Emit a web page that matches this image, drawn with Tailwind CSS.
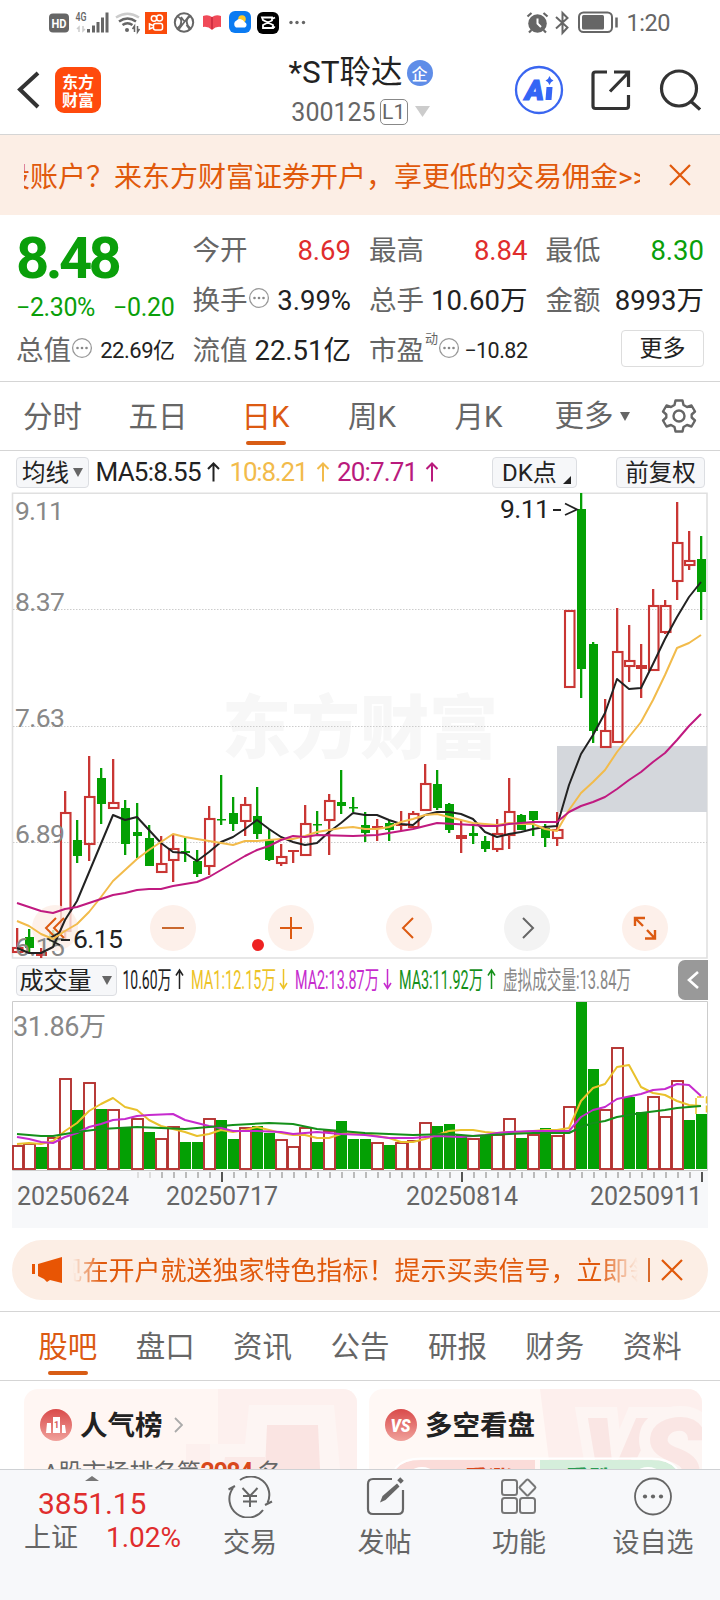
<!DOCTYPE html>
<html lang="zh-CN">
<head>
<meta charset="utf-8">
<title>*ST聆达 300125</title>
<script src="https://cdn.jsdelivr.net/npm/@tailwindcss/browser@4"></script>
</head>
<body class="bg-white">
<div class="flex h-[1600px] w-[720px] flex-col overflow-hidden bg-white font-['Roboto','Noto_Sans_CJK_SC',sans-serif] text-[#666]">

  <!-- status bar -->
  <div class="flex h-[46px] shrink-0 items-center">
    <svg width="720" height="46" viewBox="0 0 720 46" fill="none" stroke="#666" stroke-width="2">
      <rect x="49" y="13.500" width="20" height="19" rx="4" fill="#666" stroke="none"/>
      <text x="51.500" y="27.500" font-size="12.500" font-weight="700" fill="#fff" stroke="none" textLength="15" lengthAdjust="spacingAndGlyphs">HD</text>
      <text x="75.500" y="21" font-size="12" font-weight="500" fill="#666" stroke="none" textLength="11" lengthAdjust="spacingAndGlyphs">4G</text>
      <path d="M79 32v-5l-2 2M83 26v5l2-2" stroke="#ccc" stroke-width="1.500"/>
      <path d="M88.500 29v3.500M93.500 25.500v7M98 22v10.500M102.500 17.500v15M107 12.500v20" stroke-width="3"/>
      <path d="M116 17.500q11.500-7.500 23 0" stroke="#ccc" stroke-width="2.500"/>
      <path d="M119 21.500q8.500-6 17 0M122.500 25q5-3.500 10 0" stroke-width="2.500"/>
      <circle cx="127" cy="30" r="2" fill="#666" stroke="none"/>
      <path d="M134.500 32v-6l-2 3M137.500 26v6l2-3" stroke-width="1.500"/>
      <rect x="145" y="12" width="22" height="22" fill="#fa4b0b" stroke="none"/>
      <g stroke="#fff" stroke-width="1.500"><circle cx="154" cy="18.500" r="2.700"/><circle cx="159.500" cy="18" r="3"/><rect x="153.500" y="23.500" width="9" height="6.500" rx="2"/><path d="M153 25.500l-3.500-1.500v5l3.500-1.500"/></g>
      <circle cx="184" cy="22.500" r="9.200"/>
      <path d="M177.500 16.500c5 2 5 8 0 12M190.500 16.500c-5 2-5 8 0 12M181 17l3 4M186.500 25l3 4M179 29l10-13" stroke-width="1.800"/>
      <path d="M203 16q5-2 9 1q4-3 9-1v11q-5-1-9 3q-4-4-9-3z" fill="#f04a58" stroke="none"/><path d="M212 17v12" stroke="#c9283c" stroke-width="1.500"/>
      <rect x="229" y="11" width="22" height="22" rx="6" fill="#0b7bf2" stroke="none"/>
      <circle cx="242" cy="19" r="3.800" fill="#ffc928" stroke="none"/>
      <path d="M236 27.500a4 4 0 0 1 .5-7a5 5 0 0 1 8 1.500a3 3 0 0 1 .5 5.500z" fill="#fff" stroke="none"/>
      <rect x="257" y="12" width="22" height="22" rx="6" fill="#000" stroke="none"/>
      <path d="M262 17.500h10v3l-9 4.500v3h10v-3l-10-5zM272 19l3-1.500M272 26l3 1.500" stroke="#fff" stroke-width="1.800"/>
      <g fill="#666" stroke="none"><circle cx="291" cy="22.500" r="1.700"/><circle cx="297" cy="22.500" r="1.700"/><circle cx="303.500" cy="22.500" r="1.700"/></g>
      <circle cx="537.500" cy="23.500" r="9.300" fill="#666" stroke="none"/>
      <path d="M537.500 18.500v5l3.500 3.500" stroke="#fff" stroke-width="2"/>
      <path d="M527.500 16.500l4-3.500M547.500 16.500l-4-3.500M531.500 30l-2.500 2.500M543.500 30l2.500 2.500" stroke-width="2.200"/>
      <path d="M556 17l11.500 10.500-5 5.500v-20l5 5L556 28.500" stroke-width="2"/>
      <rect x="579" y="12.500" width="33" height="19.500" rx="4.500"/>
      <rect x="582" y="15" width="22" height="14.500" rx="1.500" fill="#666" stroke="none"/>
      <path d="M616.500 17.500v10" stroke-width="2.500"/>
      <text x="626.500" y="31" font-size="23.500" fill="#666" stroke="none" textLength="44">1:20</text>
    </svg>
  </div>

  <!-- header -->
  <header class="flex h-[89px] shrink-0 items-center justify-between border-b border-[#d5d5d5] pr-[19px] pl-[17px]">
    <div class="flex w-[195px] items-center gap-[15px]">
      <svg width="23" height="38" viewBox="0 0 23 38" fill="none" stroke="#333" stroke-width="4"><path d="M21 2L3 18.500L21 36"/></svg>
      <div class="flex h-[46px] w-[46px] flex-col items-center justify-center rounded-[9px] bg-[#ff4a0d] font-['Noto_Sans_CJK_SC'] text-[16px] leading-[18.500px] font-bold text-white"><span>东方</span><span>财富</span></div>
    </div>
    <div class="flex flex-col items-center pt-[3px] pr-[4px]">
      <div class="flex h-[40px] items-center gap-[4px] text-[31.500px] leading-[40px] text-[#222]"><span class="whitespace-nowrap">*ST聆达</span>
        <span class="flex h-[26px] w-[26px] items-center justify-center rounded-full bg-[#5f8de8] font-['Noto_Sans_CJK_SC'] text-[16px] leading-[26px] font-medium text-white">企</span></div>
      <div class="flex h-[37px] items-center gap-[4px] text-[25px] leading-[37px]"><span class="mt-px">300125</span>
        <span class="flex h-[26px] w-[28px] items-center justify-center rounded-[5px] border-[1.500px] border-[#888] text-[21px] leading-[22px]">L1</span>
        <svg class="ml-[3px]" width="15" height="11" viewBox="0 0 15 11"><path d="M0 0h15L7.500 11z" fill="#ccc"/></svg></div>
    </div>
    <div class="flex w-[188px] items-center">
      <svg width="188" height="50" viewBox="0 0 188 50" fill="none" stroke="#333" stroke-width="3.200">
        <circle cx="26" cy="25" r="23" stroke="#3a66f0" stroke-width="2.300"/>
        <text x="12" y="34.500" font-size="27" font-weight="900" font-style="italic" fill="#3465f5" stroke="#3465f5" stroke-width="1.200" textLength="19" lengthAdjust="spacingAndGlyphs">A</text>
        <path d="M33.500 22h6l-1 13h-6z" fill="#3465f5" stroke="none"/><path d="M36.500 11q1 3.500 4 4.500q-3 1-4 4.500q-1-3.500-4-4.500q3-1 4-4.500z" fill="#3465f5" stroke="none"/>
        <path d="M94 7H82.500Q80 7 80 9.500V41q0 2.500 2.500 2.500H113q2.500 0 2.500-2.500V30M101 7h14.500v15M97 26.500L115 8"/>
        <circle cx="166" cy="23.500" r="17.500"/><path d="M177.500 36l9.500 8.500"/>
      </svg>
    </div>
  </header>

  <!-- account banner -->
  <div class="flex h-[80px] shrink-0 items-center bg-[#fceee5] pl-[24px] text-[28px] leading-[40px] text-[#e0590c]">
    <div class="mt-[5px] w-[616px] overflow-hidden whitespace-nowrap"><span class="ml-[-22px]">设账户？来东方财富证券开户，享更低的交易佣金&gt;&gt;&gt;</span></div>
    <svg class="ml-[29px]" width="22" height="22" viewBox="0 0 22 22" stroke="#e0590c" stroke-width="2.200"><path d="M1 1l20 20M21 1L1 21"/></svg>
  </div>

  <!-- quote -->
  <section class="grid h-[167px] shrink-0 grid-cols-[158.500px_158.500px_158.500px_158.500px] grid-rows-[50px_50px_50px] gap-x-[18px] border-b border-[#d5d5d5] pt-[11px] pl-[16px] text-[27.500px] leading-[50px] whitespace-nowrap">
    <div class="row-span-2 flex flex-col text-[#0a9f0a]">
      <div class="h-[65px] text-[58px] leading-[64px] font-bold tracking-[-3.600px]">8.48</div>
      <div class="flex h-[34px] items-center justify-between text-[25px] leading-[34px]"><span class="tracking-[-0.400px]">−2.30%</span><span class="tracking-[-0.300px]">−0.20</span></div>
    </div>
    <div class="flex items-center justify-between"><span>今开</span><span class="text-[#e02d2d]">8.69</span></div>
    <div class="flex items-center justify-between"><span>最高</span><span class="text-[#e02d2d]">8.84</span></div>
    <div class="flex items-center justify-between"><span>最低</span><span class="text-[#0a9f0a]">8.30</span></div>
    <div class="flex items-center justify-between"><span class="flex items-center"><span>换手</span><svg class="mb-[6px]" width="22" height="22" viewBox="0 0 22 22"><circle cx="11" cy="11" r="9.400" fill="none" stroke="#999" stroke-width="1.300"/><g fill="#888"><circle cx="6.500" cy="11" r="1.300"/><circle cx="11" cy="11" r="1.300"/><circle cx="15.500" cy="11" r="1.300"/></g></svg></span><span class="text-[#222]">3.99%</span></div>
    <div class="flex items-center justify-between"><span>总手</span><span class="text-[#222]">10.60万</span></div>
    <div class="flex items-center justify-between"><span>金额</span><span class="text-[#222]">8993万</span></div>
    <div class="flex items-center justify-between"><span class="flex items-center"><span>总值</span><svg class="mb-[6px]" width="22" height="22" viewBox="0 0 22 22"><circle cx="11" cy="11" r="9.400" fill="none" stroke="#999" stroke-width="1.300"/><g fill="#888"><circle cx="6.500" cy="11" r="1.300"/><circle cx="11" cy="11" r="1.300"/><circle cx="15.500" cy="11" r="1.300"/></g></svg></span><span class="text-[22px] tracking-[-0.500px] text-[#222]">22.69亿</span></div>
    <div class="flex items-center justify-between"><span>流值</span><span class="text-[#222]">22.51亿</span></div>
    <div class="flex items-center justify-between"><span class="flex items-center"><span>市盈</span><span class="mb-[24px] ml-px text-[13px] leading-[16px]">动</span><svg class="mb-[6px]" width="22" height="22" viewBox="0 0 22 22"><circle cx="11" cy="11" r="9.400" fill="none" stroke="#999" stroke-width="1.300"/><g fill="#888"><circle cx="6.500" cy="11" r="1.300"/><circle cx="11" cy="11" r="1.300"/><circle cx="15.500" cy="11" r="1.300"/></g></svg></span><span class="text-[21.500px] tracking-[-0.500px] text-[#222]">−10.82</span></div>
    <div class="flex items-center justify-end"><span class="mb-[6px] flex h-[37px] w-[83px] items-center justify-center rounded-[4px] border border-[#ddd] text-[23px] leading-[35px] text-[#222]">更多</span></div>
  </section>

  <!-- period tabs -->
  <nav class="flex h-[69px] shrink-0 border-b border-[#d5d5d5] text-[29.500px] leading-[70px]">
    <div class="w-[105px] text-center">分时</div>
    <div class="w-[106px] text-center">五日</div>
    <div class="flex w-[109px] flex-col items-center text-[#dc5a12]"><span class="h-[59px]">日K</span><span class="h-[4px] w-[40px] rounded-full bg-[#d85c14]"></span></div>
    <div class="w-[104px] text-center">周K</div>
    <div class="w-[109px] text-center">月K</div>
    <div class="flex w-[118px] items-center justify-center gap-[6px]"><span>更多</span><svg width="10" height="9" viewBox="0 0 10 9"><path d="M0 0h10L5 9z" fill="#666"/></svg></div>
    <svg class="mt-[16px] ml-[10px]" width="36" height="36" viewBox="0 0 36 36" fill="none" stroke="#666" stroke-width="2.400" stroke-linejoin="round"><circle cx="18" cy="18" r="5.500"/><path d="M14.500 2.500h7l1 4.500l3.500 2l4.500-1.500l3.500 6l-3.300 3v3l3.300 3l-3.500 6l-4.500-1.500l-3.500 2l-1 4.500h-7l-1-4.500l-3.500-2l-4.500 1.500l-3.500-6l3.300-3v-3l-3.300-3l3.500-6l4.500 1.500l3.500-2z"/></svg>
  </nav>

  <!-- indicator row -->
  <div class="flex h-[41px] shrink-0 items-center pt-[2px] pl-[16px] text-[24.500px] leading-[30px] whitespace-nowrap text-[#222]">
    <div class="flex h-[31px] w-[73px] items-center justify-center gap-[4px] rounded-[4px] border border-[#dcdee2] bg-[#f6f7f9] text-[23.500px]"><span>均线</span><svg width="10" height="9" viewBox="0 0 10 9"><path d="M0 0h10L5 9z" fill="#666"/></svg></div>
    <svg width="399" height="34" viewBox="89 0 399 34" fill="none" stroke-width="2">
      <text x="95.500" y="25" font-size="26" fill="#222" textLength="106">MA5:8.55</text><path d="M213.500 25.500V7.500M208 13l5.500-5.500L219 13" stroke="#222"/>
      <text x="229.500" y="25" font-size="26" fill="#f2bb4b" textLength="79">10:8.21</text><path d="M323 25.500V7.500M317.500 13l5.500-5.500l5.500 5.500" stroke="#f2bb4b"/>
      <text x="337" y="25" font-size="26" fill="#b91a7c" textLength="81">20:7.71</text><path d="M432 25.500V7.500M426.500 13l5.500-5.500l5.500 5.500" stroke="#b91a7c"/>
    </svg>
    <div class="ml-[4px] flex h-[31px] w-[85px] items-center rounded-[4px] border border-[#dcdee2] bg-[#f6f7f9] pl-[9px] text-[24px]"><span>DK点</span><svg class="mt-[14px] ml-[6px]" width="8" height="8" viewBox="0 0 8 8"><path d="M8 0v8H0z" fill="#222"/></svg></div>
    <div class="ml-[39px] flex h-[31px] w-[89px] items-center justify-center rounded-[4px] border border-[#dcdee2] bg-[#f6f7f9] text-[23.500px]">前复权</div>
  </div>

  <!-- price chart -->
  <div class="relative h-[468px] shrink-0">
    <svg id="price" width="720" height="468" viewBox="0 492 720 468" fill="none">
      <path d="M12.500 493.300H707V958H12.500z" stroke="#e0e0e0" stroke-width="1.600"/>
      <text x="222" y="753" font-size="69" font-weight="900" fill="#f7f7f7" textLength="276" font-family="Noto Sans CJK SC">东方财富</text>
      <path d="M13 609.500H707M13 726.500H707M13 842.500H707" stroke="#ccc" stroke-dasharray="1.500 1.500"/>
      <rect x="557" y="746" width="150" height="66" fill="#d4d7dc"/>
      <g id="candles"></g>
    </svg>
    <div class="absolute top-[413px] left-[32px] flex gap-[72px]">
      <span class="flex h-[46px] w-[46px] items-center justify-center rounded-full bg-[#fdeee6]/80"><svg width="22" height="22" viewBox="0 0 22 22" fill="none" stroke="#dc5a12" stroke-width="2"><path d="M12 1L2 11l10 10M20 1L10 11l10 10"/></svg></span>
      <span class="flex h-[46px] w-[46px] items-center justify-center rounded-full bg-[#fdf0ea]"><svg width="22" height="22" viewBox="0 0 22 22" fill="none" stroke="#c9682e" stroke-width="2"><path d="M0 11h22"/></svg></span>
      <span class="flex h-[46px] w-[46px] items-center justify-center rounded-full bg-[#fdf0ea]"><svg width="22" height="22" viewBox="0 0 22 22" fill="none" stroke="#dc5a12" stroke-width="2"><path d="M0 11h22M11 0v22"/></svg></span>
      <span class="flex h-[46px] w-[46px] items-center justify-center rounded-full bg-[#fdf0ea]"><svg width="22" height="22" viewBox="0 0 22 22" fill="none" stroke="#dc5a12" stroke-width="2"><path d="M15 1L5 11l10 10"/></svg></span>
      <span class="flex h-[46px] w-[46px] items-center justify-center rounded-full bg-[#f3f3f3]"><svg width="22" height="22" viewBox="0 0 22 22" fill="none" stroke="#666" stroke-width="2"><path d="M7 1l10 10L7 21"/></svg></span>
      <span class="flex h-[46px] w-[46px] items-center justify-center rounded-full bg-[#fdf0ea]"><svg width="24" height="24" viewBox="0 0 24 24" fill="none" stroke="#dc5a12" stroke-width="2.400"><path d="M2 10V2h10M2 2l8 8M22 14v8.500H12M22 22.500l-8-8.500"/></svg></span>
    </div>
    <svg id="averages" class="absolute top-0 left-0" width="720" height="468" viewBox="0 492 720 468" fill="none">
      <circle cx="258" cy="945" r="6" fill="#ee2222"/>
      <g font-size="26.500" fill="#888">
        <text x="15" y="520" textLength="49">9.11</text><text x="15" y="611" textLength="50">8.37</text><text x="15" y="727" textLength="50">7.63</text><text x="15" y="843" textLength="50">6.89</text><text x="15" y="955.500" textLength="50">6.15</text>
      </g>
      <g font-size="26.500" fill="#222"><text x="500" y="517.500" textLength="50">9.11</text><path d="M553 510h8M565 503.500l12 6l-12 5.500M61 940h9M60 932.500L48 939l12 6" stroke="#222" stroke-width="1.800" fill="none"/><text x="73" y="948" textLength="50">6.15</text></g>
    </svg>
  </div>

  <!-- volume indicator row -->
  <div class="flex h-[41px] shrink-0 items-center pl-[16px] whitespace-nowrap text-[#222]">
    <div class="flex h-[31px] w-[101px] items-center justify-center gap-[10px] rounded-[4px] border border-[#dcdee2] bg-[#f6f7f9] pr-[2px] text-[24px] leading-[30px]"><span>成交量</span><svg width="10" height="9" viewBox="0 0 10 9"><path d="M0 0h10L5 9z" fill="#666"/></svg></div>
    <svg width="561" height="41" viewBox="117 0 561 41" fill="none" stroke-width="1.500" font-size="25">
      <text x="122.500" y="28.500" fill="#222" textLength="49" lengthAdjust="spacingAndGlyphs">10.60万</text><path d="M179.500 29V10M176 15.500l3.500-5.500l3.500 5.500" stroke="#222"/>
      <text x="191" y="28.500" fill="#edc327" textLength="85" lengthAdjust="spacingAndGlyphs">MA1:12.15万</text><path d="M283.500 9v19M280 23l3.500 5.500l3.500-5.500" stroke="#edc327"/>
      <text x="295" y="28.500" fill="#c62bce" textLength="84" lengthAdjust="spacingAndGlyphs">MA2:13.87万</text><path d="M387.500 9v19M384 23l3.500 5.500l3.500-5.500" stroke="#c62bce"/>
      <text x="399" y="28.500" fill="#14901a" textLength="84" lengthAdjust="spacingAndGlyphs">MA3:11.92万</text><path d="M491.500 29V10M488 15.500l3.500-5.500l3.500 5.500" stroke="#14901a"/>
      <text x="503" y="28.500" fill="#888" textLength="128" lengthAdjust="spacingAndGlyphs">虚拟成交量:13.84万</text>
    </svg>
    <div class="mb-px flex h-[40px] w-[30px] items-center justify-center rounded-l-[7px] bg-[#999]"><svg width="12" height="18" viewBox="0 0 12 18" fill="none" stroke="#fff" stroke-width="2.600"><path d="M11 1L2 9l9 8"/></svg></div>
  </div>

  <!-- volume chart -->
  <svg id="volume" class="shrink-0" width="720" height="228" viewBox="0 1001 720 228" fill="none">
    <rect x="12" y="1171" width="696" height="57" fill="#f7f8fa"/>
    <path d="M12.500 1001.500H707.500V1170.500H12.500z" stroke="#ccc"/>
    <text x="13" y="1036" font-size="27" fill="#888" textLength="93">31.86万</text>
    <g id="bars"></g>
    <g id="ticks"></g>
    <g font-size="25" fill="#666"><text x="17" y="1205" textLength="112">20250624</text><text x="166" y="1205" textLength="112">20250717</text><text x="406" y="1205" textLength="112">20250814</text><text x="590" y="1205" textLength="112">20250911</text></g>
  </svg>

  <!-- promo pill -->
  <div class="mx-[12px] mt-[11px] flex h-[60px] shrink-0 items-center rounded-full bg-[#fceee5] pl-[20px] text-[26px] leading-[40px] text-[#e0590c]">
    <svg width="31" height="28" viewBox="0 0 31 28" fill="#e85504"><path d="M0 8h3v10H0zM6 8L30 1v26l-12-3l-3 2l-3-3l-6-3z"/></svg>
    <div class="mt-px ml-[10px] w-[565px] overflow-hidden whitespace-nowrap [mask-image:linear-gradient(to_right,transparent,#000_5%,#000_93%,transparent)]"><span class="ml-[-16.500px]">现在开户就送独家特色指标！提示买卖信号，立即领取</span></div>
    <span class="ml-[10px] h-[24px] w-[1.500px] bg-[#d86a2c]"></span>
    <svg class="ml-[11px]" width="22" height="22" viewBox="0 0 22 22" stroke="#e0590c" stroke-width="2.200"><path d="M1 1l20 20M21 1L1 21"/></svg>
  </div>

  <!-- content tabs -->
  <nav class="mt-[11px] flex h-[70px] shrink-0 border-y border-[#d5d5d5] px-[19px] text-[29.500px] leading-[71px] *:w-[97.500px] *:text-center">
    <div class="flex flex-col items-center text-[#dc5a12]"><span class="h-[59px]">股吧</span><span class="h-[4px] w-[40px] rounded-full bg-[#d85c14]"></span></div>
    <div>盘口</div><div>资讯</div><div>公告</div><div>研报</div><div>财务</div><div>资料</div>
  </nav>

  <!-- cards -->
  <main class="flex h-[88px] shrink-0 gap-[12px] overflow-hidden pt-[8px] pl-[24px]">
    <section class="relative h-[120px] w-[333px] overflow-hidden rounded-[14px] bg-[#fff6f3]">
      <svg class="absolute top-0 left-0" width="333" height="80" viewBox="0 0 333 80"><path d="M194 0h139v80H162V55h32z" fill="#fdf0ee"/><path d="M225 16h85l6 64H186V55h35z" fill="#fdf5f3"/><path d="M243 36h51l2 44h-55z" fill="#fae4e2"/><path d="M201 68h40v12h-42z" fill="#fbe9e7"/></svg>
      <div class="relative flex h-[72px] items-center pl-[16px] text-[27.500px] leading-[40px] font-bold text-[#222]">
        <svg width="32" height="32" viewBox="0 0 32 32"><defs><linearGradient id="badge" x2="0" y2="1"><stop stop-color="#d94a4a"/><stop offset="1" stop-color="#f0a19b"/></linearGradient></defs><circle cx="16" cy="16" r="16" fill="url(#badge)"/><path d="M7 14h4v10H6zM13 8h7v16h-7zM22 16h3l1 8h-4z" fill="#fff"/><text x="14" y="19" font-size="9" fill="#d8605c">1</text></svg>
        <span class="mt-px ml-[8px]">人气榜</span>
        <svg class="ml-[11px]" width="9" height="16" viewBox="0 0 9 16" fill="none" stroke="#aaa" stroke-width="1.800"><path d="M1 1l7 7l-7 7"/></svg>
      </div>
      <p class="relative -mt-[5px] pl-[19px] text-[24px] leading-[34px] tracking-[-0.300px] whitespace-nowrap">A股市场排名第<b class="text-[25px] tracking-[-1.500px] text-[#d9481c]">2084</b> 名</p>
    </section>
    <section class="relative h-[120px] w-[333px] overflow-hidden rounded-[14px] bg-[#fff8f5]">
      <svg class="absolute top-0 left-0" width="333" height="80" viewBox="0 0 333 80"><path d="M171 0h162v80H181z" fill="#fdefed"/><text x="212" y="104" font-size="106" font-weight="900" font-style="italic" fill="#fae6e4" stroke="#fdf5f3" stroke-width="22" paint-order="stroke" textLength="124">VS</text><path d="M26 80Q34 71 52 71H166V80z" fill="#fbdcd9"/><path d="M171 71H282q18 0 26 9H171z" fill="#d5eedb"/><path d="M26 80Q34 69.500 52 69.500H282q18 0 26 10.500" fill="none" stroke="#fff" stroke-width="2"/><circle cx="53" cy="97" r="19" fill="#fff"/><circle cx="279" cy="97" r="19" fill="#fff"/><text x="95" y="99" font-size="24" font-weight="700" fill="#d9481c">看涨</text><text x="196" y="99" font-size="24" font-weight="700" fill="#299a52">看跌</text></svg>
      <div class="relative flex h-[72px] items-center pl-[16px] text-[27.500px] leading-[40px] font-bold text-[#222]">
        <svg width="32" height="32" viewBox="0 0 32 32"><circle cx="16" cy="16" r="16" fill="url(#badge)"/><text x="5.500" y="23" font-size="19" font-weight="900" font-style="italic" fill="#fff" textLength="20" lengthAdjust="spacingAndGlyphs">VS</text></svg>
        <span class="mt-px ml-[8px]">多空看盘</span>
      </div>
    </section>
  </main>

  <!-- bottom bar -->
  <footer class="flex grow border-t border-[#cfd1d4] bg-[#f7f8fa] text-[27px] leading-[36px]">
    <div class="flex w-[183px] flex-col">
      <svg class="mt-[6px] ml-[85px]" width="14" height="5" viewBox="0 0 14 5"><path d="M7 0l7 5H0z" fill="#777"/></svg>
      <div class="mt-[5px] ml-[38px] h-[33px] text-[30px] leading-[36px] tracking-[-0.100px] text-[#e02d2d]">3851.15</div>
      <div class="flex h-[36px] items-center justify-between pr-[2px] pl-[24px]"><span class="mt-px">上证</span><span class="mt-px text-[28px] text-[#e02d2d]">1.02%</span></div>
    </div>
    <div class="flex w-[134px] flex-col items-center pt-[6px]">
      <svg width="46" height="42" viewBox="0 0 46 42" fill="none" stroke="#666" stroke-width="2"><path d="M13 4A18.500 18.500 0 0 1 40.500 27M36 34A18.500 18.500 0 0 1 6 12M1.500 13.500L8 10M38 29l7-3.500M15.500 12l7.500 8l7.500-8M23 20v11M16 20h14M16 25.500h14"/></svg>
      <span class="mt-[7px]">交易</span>
    </div>
    <div class="flex w-[135px] flex-col items-center pt-[6px]">
      <svg width="40" height="42" viewBox="0 0 40 42" fill="none" stroke="#666" stroke-width="2.200"><path d="M27 3H8Q3 3 3 8v25q0 5 5 5h25q5 0 5-5V14"/><path d="M15 26.500L17.500 20L32 7.500l2.500 3L20.500 24z" fill="#666" stroke="none"/><path d="M34 6l3-3" stroke-width="5"/></svg>
      <span class="mt-[7px]">发帖</span>
    </div>
    <div class="flex w-[134px] flex-col items-center pt-[6px]">
      <svg width="38" height="42" viewBox="0 0 38 42" fill="none" stroke="#777" stroke-width="2"><rect x="2" y="4" width="15" height="15" rx="2.500"/><rect x="2" y="22" width="15" height="15" rx="2.500"/><rect x="20" y="22" width="15" height="15" rx="2.500"/><rect x="21.500" y="5.500" width="12" height="12" rx="1.500" transform="rotate(45 27.500 11.500)"/></svg>
      <span class="mt-[7px]">功能</span>
    </div>
    <div class="flex w-[134px] flex-col items-center pt-[6px]">
      <svg width="40" height="42" viewBox="0 0 40 42" fill="none" stroke="#666" stroke-width="1.800"><circle cx="20" cy="20.500" r="18"/><g fill="#666" stroke="none"><circle cx="12" cy="20.500" r="2.100"/><circle cx="20" cy="20.500" r="2.100"/><circle cx="28" cy="20.500" r="2.100"/></g></svg>
      <span class="mt-[7px]">设自选</span>
    </div>
  </footer>
</div>

<script>
const NS = 'http://www.w3.org/2000/svg';
const RED = '#c93634', GREEN = '#04a004';
const cx = i => 17 + 12 * i;
function add(parent, tag, attrs) {
  const e = document.createElementNS(NS, tag);
  for (const k in attrs) e.setAttribute(k, attrs[k]);
  parent.appendChild(e);
}
// rows: direction, body top, body bottom, wick top, wick bottom
const candles = `r 947 953 928 953|g 937 948 929 952|r 952 956 948 958|g 933 942 930 945|r 812 932 791 939|g 840 856 820 863|r 796 845 756 861|g 778 804 768 824|r 802 809 759 809|g 808 844 800 855|g 832 836 803 858|g 838 866 825 866|r 863 873 836 873|r 848 861 835 882|g 851 853 838 862|g 861 874 850 877|r 818 867 806 875|g 819 820 775 825|g 813 824 797 831|r 804 822 797 836|g 816 834 787 839|g 840 860 829 861|r 856 864 844 866|r 850 852 850 863|r 823 856 805 856|g 824 825 811 834|r 800 821 794 855|g 802 806 770 814|g 807 808 797 812|g 825 833 812 842|r 826 828 819 841|g 823 830 820 841|r 824 826 811 831|r 813 828 811 828|r 783 811 764 811|g 784 808 770 810|g 804 830 803 833|r 835 839 820 853|g 833 836 824 844|g 841 849 836 852|r 833 850 819 852|r 811 836 778 849|g 815 830 814 830|g 811 820 811 836|g 828 838 824 847|r 829 839 812 846|r 610 688 610 688|g 509 669 493 698|g 644 731 642 743|r 730 748 699 748|r 651 743 608 743|r 660 667 625 682|r 665 669 644 698|r 605 671 589 671|r 605 633 600 634|r 542 582 502 600|r 560 566 531 570|g 559 592 536 620`.split('|');
const cg = document.getElementById('candles');
candles.forEach((row, i) => {
  const [d, ...n] = row.split(' '); const [a, b, t, l] = n.map(Number), x = cx(i);
  if (d === 'g') {
    add(cg, 'rect', {x: x - 1, y: t, width: 2.300, height: l - t, fill: GREEN});
    add(cg, 'rect', {x: x - 4, y: a, width: 9, height: Math.max(1.500, b - a), fill: GREEN});
  } else {
    add(cg, 'rect', {x: x - 1, y: t, width: 2.300, height: Math.max(0, a - t), fill: RED});
    add(cg, 'rect', {x: x - 1, y: b, width: 2.300, height: Math.max(0, l - b), fill: RED});
    if (b - a > 4) add(cg, 'rect', {x: x - 4, y: a + 1, width: 9.500, height: b - a - 2, stroke: RED, 'stroke-width': 2.100});
    else add(cg, 'rect', {x: x - 5, y: a, width: 11, height: b - a, fill: RED});
  }
});
const ag = document.getElementById('averages');
const line = (g, points, stroke) => add(g, 'polyline', {points, stroke, 'stroke-width': 2, 'stroke-linejoin': 'round'});
line(ag, '17,948 29,953 41,953 53,947 65,920 77,901 113,815 125,820 137,817 149,830 161,843 173,852 185,853 197,861 209,852 221,842 233,837 245,829 257,820 269,829 281,837 293,842 305,845 317,843 329,832 341,823 353,813 365,815 377,815 389,820 401,824 413,825 425,815 437,812 449,812 461,814 473,819 485,832 497,837 509,834 521,832 533,829 545,827 557,826 569,785 581,754 593,735 605,713 617,679 629,689 641,688 653,664 665,639 677,617 689,597 701,582', '#222');
line(ag, '17,921 29,926 41,934 53,939 65,931 77,924 89,912 101,897 113,881 125,870 137,859 149,850 161,842 173,834 185,837 197,839 209,841 221,843 233,845 245,841 257,841 281,839 293,839 305,836 317,832 329,830 341,828 353,827 365,829 377,829 389,827 401,822 413,819 425,815 437,814 449,817 461,820 473,823 485,824 497,825 509,823 521,824 533,824 545,829 557,831 569,810 581,793 593,782 605,770 617,752 629,737 641,722 653,700 665,675 677,648 689,643 701,635', '#f2bb4b');
line(ag, '17,903 29,907 41,911 53,913 65,909 77,907 89,903 101,899 113,895 125,893 137,890 149,889 161,889 173,886 185,884 197,882 209,877 221,870 233,863 245,856 257,850 269,846 281,840 293,836 305,837 317,835 353,836 377,835 389,833 401,831 413,829 425,826 437,823 473,825 485,826 497,826 509,824 521,823 533,822 557,822 569,812 581,806 593,802 605,797 617,789 629,780 641,772 653,762 665,753 677,740 689,726 701,714', '#c01a80');

const volumes = 'r1145 r1143 g1147 r1137 r1078 g1110 r1082 g1109 r1109 g1127 r1118 g1132 r1138 r1126 g1142 g1142 r1118 g1120 g1139 r1127 g1126 g1133 r1139 r1146 r1127 g1142 r1130 g1121 g1139 g1139 r1142 g1145 r1142 r1140 r1122 g1126 g1124 g1135 r1138 g1136 r1134 r1118 g1138 r1134 g1128 r1135 r1106 g1002 g1069 r1109 r1047 g1097 g1112 r1096 r1116 r1080 g1120 g1114'.split(' ');
const bg = document.getElementById('bars');
volumes.forEach((v, i) => {
  const y = Number(v.slice(1)), x = cx(i);
  if (v[0] === 'g') add(bg, 'rect', {x: x - 5, y, width: 11, height: 1169 - y, fill: GREEN});
});
volumes.forEach((v, i) => {
  const y = Number(v.slice(1)), x = cx(i), left = Math.max(x - 5, 13);
  if (v[0] === 'r') add(bg, 'rect', {x: left, y: y + 1, width: x + 6 - left, height: 1168 - y, stroke: '#b43230', 'stroke-width': 1.900});
});
add(bg, 'path', {d: 'M696 1114V1097H706.500V1114', stroke: '#edc327', 'stroke-width': 1.500, 'stroke-dasharray': '7 2'});
line(bg, '17,1144 29,1143 41,1144 53,1141 65,1131 77,1123 89,1111 101,1104 113,1098 125,1107 137,1110 149,1120 161,1126 173,1129 185,1132 197,1136 209,1134 221,1130 233,1132 245,1130 257,1127 269,1130 281,1133 293,1135 305,1135 317,1138 329,1138 341,1134 353,1133 365,1134 377,1136 389,1138 401,1142 413,1142 425,1139 437,1135 449,1131 461,1130 473,1130 485,1132 497,1133 509,1132 521,1132 533,1131 545,1130 557,1130 569,1128 581,1101 593,1088 605,1084 617,1067 629,1065 641,1087 653,1093 665,1095 677,1101 689,1105 701,1106', '#e9c12c');
line(bg, '17,1137 29,1139 41,1142 53,1143 65,1137 77,1133 89,1127 101,1124 113,1120 125,1119 137,1116 149,1115 173,1114 185,1120 209,1126 221,1128 233,1131 257,1131 281,1132 293,1134 317,1132 341,1134 365,1135 389,1138 413,1138 437,1136 461,1137 485,1135 497,1133 509,1132 533,1131 569,1131 581,1117 593,1110 605,1107 617,1099 641,1094 653,1090 665,1089 677,1084 689,1085 701,1096', '#c62bce');
line(bg, '17,1134 41,1136 53,1136 77,1132 101,1129 137,1127 161,1128 185,1129 209,1127 233,1125 269,1123 293,1124 317,1129 341,1131 365,1133 389,1134 413,1135 449,1134 473,1136 509,1134 533,1133 569,1133 581,1127 593,1123 605,1121 617,1117 641,1113 665,1110 677,1108 701,1106', '#14901a');

const tg = document.getElementById('ticks');
for (let x = 138; x <= 702; x += 12) {
  const major = (x - 222) % 240 === 0;
  add(tg, 'rect', {x: x - 1, y: 1172, width: 2, height: major ? 10 : 6, fill: major ? '#555' : x < 162 ? '#ddd' : '#bbb'});
}
</script>
</body>
</html>
